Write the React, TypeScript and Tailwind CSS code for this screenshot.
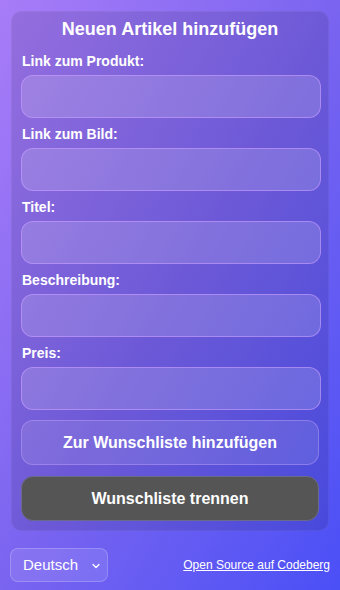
import React from "react";

const fields = ["Link zum Produkt:", "Link zum Bild:", "Titel:", "Beschreibung:", "Preis:"];

export default function App() {
  return (
    <div
      className="w-[340px] h-[590px] overflow-hidden bg-gradient-to-br from-[#a87cf8] via-[#7a64f0] to-[#4a4ff6] text-white"
      style={{ fontFamily: '"Liberation Sans", Arial, sans-serif' }}
    >
      <div className="px-[11px] pt-[11px]">
        <div className="rounded-[10px] bg-black/10 border border-white/5 pl-[9px] pr-[7px] pt-[5px] pb-[9px]">
          <h1 className="text-center text-[18px] font-bold leading-[24px] mb-[12px] pr-[2px]">Neuen Artikel hinzufügen</h1>
          {fields.map((f, i) => (
            <div key={f} className={i === fields.length - 1 ? "mb-[10px]" : "mb-[8px]"}>
              <label className="block text-[14px] font-bold leading-[16px] px-[1px] mb-[6px]">{f}</label>
              <input
                className="block w-[300px] h-[43px] rounded-[12px] bg-white/15 border border-[#c89cff]/60 outline-none"
                type="text"
              />
            </div>
          ))}
          <button className="block w-[298px] h-[45px] rounded-[12px] bg-white/10 border border-[#c8a8ff]/40 text-[16px] font-bold">
            Zur Wunschliste hinzufügen
          </button>
          <button className="block w-[298px] h-[45px] rounded-[12px] bg-[#555555] border border-[#6a6a8a] text-[16px] font-bold mt-[11px]">
            Wunschliste trennen
          </button>
        </div>
      </div>
      <div className="flex items-center justify-between pl-[10px] pr-[10px] mt-[17px]">
        <div className="relative w-[98px] h-[34px] rounded-[8px] bg-white/10 border border-white/20 flex items-center pl-[12px]">
          <span className="text-[15px]">Deutsch</span>
          <svg className="absolute right-[7px] top-[14px]" width="8" height="6" viewBox="0 0 8 6" fill="none">
            <path d="M1 1.5 L4 4.5 L7 1.5" stroke="white" strokeWidth="1.3" strokeLinecap="round" strokeLinejoin="round" />
          </svg>
        </div>
        <a href="#" className="text-[12px] underline text-white">Open Source auf Codeberg</a>
      </div>
    </div>
  );
}
